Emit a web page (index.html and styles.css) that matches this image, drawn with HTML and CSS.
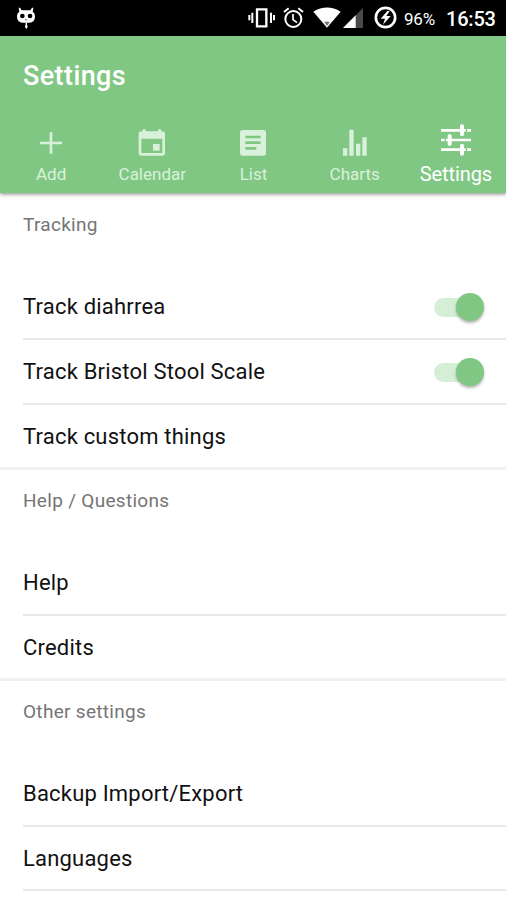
FILE: index.html
```html
<!DOCTYPE html>
<html lang="en">
<head>
<meta charset="utf-8">
<title>Settings</title>
<link rel="stylesheet" href="styles.css">
</head>
<body>
<div class="status">
  <svg class="cid" viewBox="0 0 60 72" fill="#fff"><path d="M8 5l4 0 5 8h26l5-8h4l-2 12q7 4 7 14 0 19-17 19H20Q3 50 3 31q0-10 7-14z"/><circle cx="19" cy="30" r="7" fill="#000"/><circle cx="42" cy="30" r="7" fill="#000"/><path d="M27 43l3-4 3 4z" fill="#000"/><path d="M29 50h4v5l2 8-4 6-4-6 2-8z"/></svg>
  <div class="status-right">
    <svg class="s-vib" viewBox="0 0 81 66"><path d="M27 7h28v51H27z" fill="none" stroke="#fff" stroke-width="7"/><path d="M4 24v16M13 17v31M69 17v31M78 24v16" stroke="#fff" stroke-width="6"/></svg>
    <svg class="s-alarm" viewBox="0 0 63 66" fill="none" stroke="#fff"><circle cx="31" cy="36" r="24" stroke-width="6"/><path d="M30 21v17l12 9" stroke-width="5"/><path d="M3 15L17 4M60 15L46 4" stroke-width="6"/></svg>
    <svg class="s-wifi" viewBox="0 0 84 63"><path d="M1 14Q42-11 83 14L42 62z" fill="#fff"/><path d="M34 46q8-5 16 0l-8 11z" fill="#777"/></svg>
    <svg class="s-sig" viewBox="0 0 60 60"><path d="M0 60L60 0v60z" fill="#4a4a4a"/><path d="M0 60l38-38v38z" fill="#fff"/></svg>
    <svg class="s-bat" viewBox="0 0 69 69"><circle cx="34.500" cy="34.500" r="29" fill="none" stroke="#fff" stroke-width="8"/><path d="M40 15L20 38h13l-6 18 23-26H37l10-15z" fill="#fff"/></svg>
    <span class="percent">96%</span>
    <span class="clock">16:53</span>
  </div>
</div>
<header class="header">
  <h1>Settings</h1>
  <nav class="tabs">
    <a class="tab"><svg viewBox="0 0 90 90"><path d="M45 13v64M12 45h66" stroke="currentColor" stroke-width="8"/></svg><span>Add</span></a>
    <a class="tab"><svg viewBox="0 0 90 90" fill="currentColor"><path fill-rule="evenodd" d="M17 4h9v6h37V4h9v6h4q8 0 8 8v57q0 8-8 8H13q-8 0-8-8V18q0-8 8-8h4zM13 32v43h63V32z"/><path d="M48 48h20v20H48z"/></svg><span>Calendar</span></a>
    <a class="tab"><svg viewBox="0 0 90 90"><path fill-rule="evenodd" fill="currentColor" d="M14 6h62q8 0 8 8v61q0 8-8 8H14q-8 0-8-8V14q0-8 8-8zM22 23v8h46v-8zM22 40v8h46v-8zM22 57v8h33v-8z"/></svg><span>List</span></a>
    <a class="tab"><svg viewBox="0 0 90 90"><path fill="currentColor" d="M9 61h13v22H9zM28 5h13v78H28zM48 47h13v36H48zM67 28h13v55H67z"/></svg><span>Charts</span></a>
    <a class="tab active"><svg viewBox="0 0 96 96" fill="none" stroke="currentColor"><path d="M3 19h90M3 48h90M3 77h90" stroke-width="8"/><path d="M66 7v24M29 36v24M66 65v24" stroke-width="12" stroke-linecap="round"/><path d="M79 14v10M16 43v10M79 72v10" stroke="#81c784" stroke-width="4"/></svg><span>Settings</span></a>
  </nav>
</header>
<main>
  <section>
    <h2>Tracking</h2>
    <ul>
      <li><span>Track diahrrea</span><i class="toggle"></i></li>
      <li><span>Track Bristol Stool Scale</span><i class="toggle"></i></li>
      <li><span>Track custom things</span></li>
    </ul>
  </section>
  <section>
    <h2>Help / Questions</h2>
    <ul>
      <li><span>Help</span></li>
      <li><span>Credits</span></li>
    </ul>
  </section>
  <section class="open">
    <h2>Other settings</h2>
    <ul>
      <li><span>Backup Import/Export</span></li>
      <li><span>Languages</span></li>
    </ul>
  </section>
</main>
</body>
</html>
```
FILE: styles.css
```css
* { box-sizing: border-box; }
body { margin: 0; height: 900px; overflow: hidden; background: #fff; color: #111; font-family: Roboto, "Liberation Sans", sans-serif; }
.status { height: 36px; background: #000; color: #fff; display: flex; justify-content: space-between; padding: 0 11px 0 16px; }
.status svg { display: block; flex: none; }
.cid { width: 20px; height: 24px; margin-top: 6px; }
.status-right { display: flex; align-items: flex-start; }
.s-vib { width: 27px; height: 22px; margin: 7px 8px 0 0; }
.s-alarm { width: 21px; height: 22px; margin: 7px 9px 0 0; }
.s-wifi { width: 28px; height: 21px; margin: 7px 2px 0 0; }
.s-sig { width: 20px; height: 20px; margin: 8px 11px 0 0; }
.s-bat { width: 23px; height: 23px; margin: 6px 7px 0 0; }
.percent { width: 42px; font-size: 17px; line-height: 39px; letter-spacing: -.2px; white-space: nowrap; }
.clock { width: 49px; font-size: 20px; font-weight: 500; line-height: 38px; letter-spacing: -.2px; white-space: nowrap; }
.header { position: relative; height: 157px; background: #81c784; color: #fff; box-shadow: 0 1px 4px rgba(0,0,0,.5); }
h1 { margin: 0; padding: 0 23px; height: 80px; font-size: 27px; font-weight: 500; line-height: 80px; letter-spacing: .4px; }
.tabs { display: grid; grid-template-columns: repeat(5, 1fr); height: 77px; }
.tab { display: flex; flex-direction: column; align-items: center; padding: 12px 0 0 1px; color: #d9f1da; font-size: 17px; line-height: 20px; letter-spacing: 0; }
.tab svg { width: 30px; height: 30px; margin-bottom: 6px; }
.active { color: #fff; font-size: 20px; padding-top: 8px; letter-spacing: -.1px; }
.active svg { width: 32px; height: 32px; margin-bottom: 8px; }
section { border-bottom: 3px solid #f1f1f1; }
section.open { border-bottom: 0; }
h2 { margin: 0; height: 82px; padding-left: 23px; color: #757575; font-size: 19px; font-weight: 400; line-height: 63px; letter-spacing: .3px; }
section + section h2 { height: 81px; line-height: 62px; }
ul { margin: 0; padding: 0 0 0 23px; list-style: none; }
li { display: flex; align-items: center; justify-content: space-between; height: 65px; padding-right: 21px; border-bottom: 2px solid #e8e8e8; font-size: 22px; letter-spacing: .2px; }
li:last-child { height: 62px; border-bottom: 0; }
.open li:last-child { height: 64px; border-bottom: 2px solid #e8e8e8; }
.toggle { position: relative; width: 52px; height: 30px; }
.toggle::before { content: ""; position: absolute; left: 1px; top: 6px; width: 43px; height: 19px; border-radius: 10px; background: #d5efd6; }
.toggle::after { content: ""; position: absolute; right: 1px; top: 1px; width: 28px; height: 28px; border-radius: 50%; background: #81c784; box-shadow: 0 2px 3px rgba(0,0,0,.3); }
```
